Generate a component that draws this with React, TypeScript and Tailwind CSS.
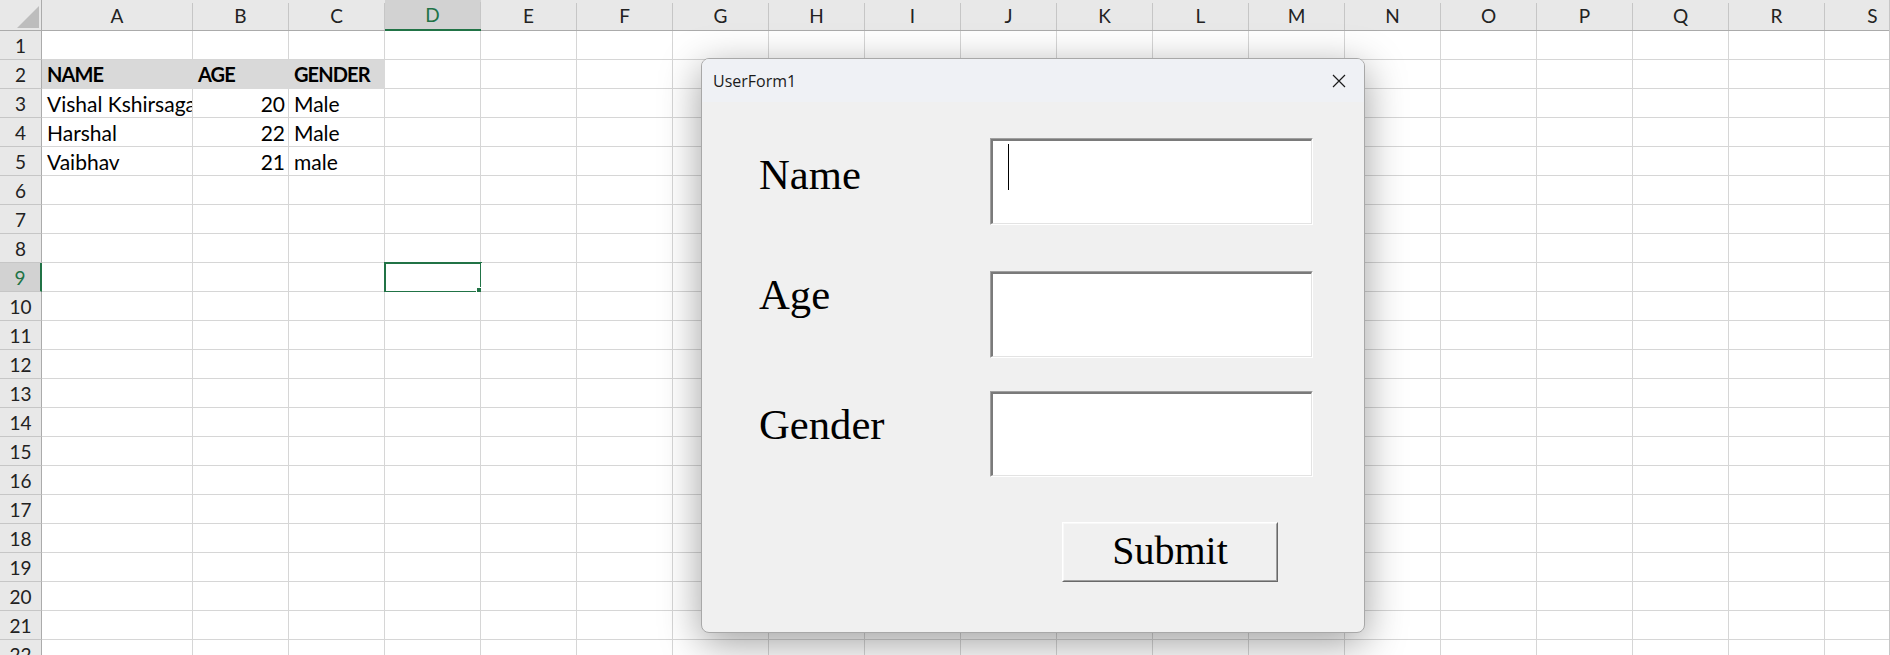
import React from 'react';

const COLS = ['A', 'B', 'C', 'D', 'E', 'F', 'G', 'H', 'I', 'J', 'K', 'L', 'M', 'N', 'O', 'P', 'Q', 'R', 'S'];

type Cell = { t: string; bold?: boolean; right?: boolean };

const DATA: Record<number, Record<string, Cell>> = {
  2: { A: { t: 'NAME', bold: true }, B: { t: 'AGE', bold: true }, C: { t: 'GENDER', bold: true } },
  3: { A: { t: 'Vishal Kshirsagar' }, B: { t: '20', right: true }, C: { t: 'Male' } },
  4: { A: { t: 'Harshal' }, B: { t: '22', right: true }, C: { t: 'Male' } },
  5: { A: { t: 'Vaibhav' }, B: { t: '21', right: true }, C: { t: 'male' } },
};

const ROWS = Array.from({ length: 22 }, (_, i) => i + 1);

function HeaderRow() {
  return (
    <div className="flex h-[31px] shrink-0">
      <div className="relative w-[42px] h-[31px] shrink-0 bg-[#e8e8e8] border-b border-r border-[#ababab]">
        <svg className="absolute right-[2px] bottom-[2px]" width="22" height="22" viewBox="0 0 22 22">
          <polygon points="22,0 22,22 0,22" fill="#bdbdbd" />
        </svg>
      </div>
      {COLS.map((c) => {
        const sel = c === 'D';
        return (
          <div
            key={c}
            className={`${c === 'A' ? 'w-[151px]' : 'w-[96px]'} shrink-0 h-[31px] flex flex-col justify-end ${
              sel ? 'bg-[#d2d2d2] border-b-2 border-[#217346]' : 'bg-[#e8e8e8] border-b border-[#ababab]'
            }`}
          >
            <div
              className={`h-[27px] border-r border-[#c6c6c6] text-center text-[19px] leading-[25px] ${
                sel ? 'text-[#217346]' : 'text-[#222222]'
              }`}
            >
              {c}
            </div>
          </div>
        );
      })}
    </div>
  );
}

function GridRow({ r }: { r: number }) {
  const selRow = r === 9;
  const rowData = DATA[r] || {};
  return (
    <div className="flex h-[29px] shrink-0">
      <div
        className={`w-[42px] h-[29px] shrink-0 border-b border-[#c6c6c6] text-center text-[19px] leading-[29px] ${
          selRow
            ? 'bg-[#d2d2d2] text-[#217346] border-r-2 border-r-[#217346]'
            : 'bg-[#e8e8e8] text-[#222222] border-r border-r-[#ababab]'
        }`}
      >
        {r}
      </div>
      {COLS.map((c) => {
        const cell = rowData[c];
        const filled = r === 2 && (c === 'A' || c === 'B' || c === 'C');
        const selected = r === 9 && c === 'D';
        return (
          <div
            key={c}
            className={`${c === 'A' ? 'w-[151px]' : 'w-[96px]'} shrink-0 h-[29px] relative border-r border-b ${
              filled ? 'bg-[#d9d9d9] border-[#d9d9d9]' : 'bg-white border-[#d6d6d6]'
            }`}
          >
            {cell && (
              <div
                className={`h-full overflow-hidden whitespace-nowrap leading-[29px] text-black px-[5px] ${
                  cell.bold ? 'font-bold text-[20px] tracking-[-0.9px]' : 'font-normal text-[21px]'
                } ${cell.right ? 'text-right pr-[3px]' : 'text-left'}`}
              >
                {cell.t}
              </div>
            )}
            {selected && (
              <>
                <div className="absolute -left-[1px] -top-[1px] w-[98px] h-[31px] border-2 border-[#217346]" />
                <div className="absolute left-[91px] top-[24px] w-[9px] h-[9px] bg-[#217346] border border-white" />
              </>
            )}
          </div>
        );
      })}
    </div>
  );
}

function SunkenBox({ caret }: { caret?: boolean }) {
  return (
    <div className="w-[323px] h-full border-t border-l border-[#a0a0a0] border-b border-b-white border-r border-r-white">
      <div className="relative w-full h-full bg-white border-t-2 border-l-2 border-[#7a7a7a] border-b border-b-[#e3e3e3] border-r border-r-[#e3e3e3]">
        {caret && <div className="absolute left-[15px] top-[3px] w-[1px] h-[46px] bg-black" />}
      </div>
    </div>
  );
}

function UserForm() {
  const serif = { fontFamily: '"Liberation Serif", "Times New Roman", serif' };
  return (
    <div className="absolute left-[701px] top-[58px] w-[664px] h-[575px] rounded-[8px] border border-[#a8a8a8] bg-[#f0f0f0] overflow-hidden shadow-[0_10px_40px_rgba(0,0,0,0.38)]">
      <div
        className="h-[43px] bg-[#eff1f5] flex items-center justify-between pl-[11px] pr-[18px]"
        style={{ fontFamily: '"Open Sans", "Noto Sans", sans-serif' }}
      >
        <span className="text-[16px] text-[#1b1b1b] leading-none">UserForm1</span>
        <svg width="14" height="14" viewBox="0 0 14 14">
          <path d="M1 1 L13 13 M13 1 L1 13" stroke="#1b1b1b" strokeWidth="1.2" fill="none" />
        </svg>
      </div>
      <div className="flex flex-col pl-[57px]" style={serif}>
        <div className="flex h-[87px] mt-[36px]">
          <div className="w-[231px] pt-[16px] text-[42.67px] leading-none text-black">Name</div>
          <SunkenBox caret />
        </div>
        <div className="flex h-[87px] mt-[46px]">
          <div className="w-[231px] pt-[3px] text-[42.67px] leading-none text-black">Age</div>
          <SunkenBox />
        </div>
        <div className="flex h-[86px] mt-[33px]">
          <div className="w-[231px] pt-[13px] text-[42.67px] leading-none text-black">Gender</div>
          <SunkenBox />
        </div>
        <div className="mt-[45px] ml-[303px] w-[216px] h-[60px] border-t border-l border-white border-b border-b-[#696969] border-r border-r-[#696969]">
          <div className="w-full h-full flex justify-center border-t border-l border-[#f8f8f8] border-b border-b-[#a0a0a0] border-r border-r-[#a0a0a0]">
            <span className="pt-[7px] text-[40px] leading-none text-black">Submit</span>
          </div>
        </div>
      </div>
    </div>
  );
}

export default function App() {
  return (
    <div
      className="relative w-[1890px] h-[655px] overflow-hidden bg-white"
      style={{ fontFamily: 'Lato, "Open Sans", sans-serif' }}
    >
      <div className="flex flex-col">
        <HeaderRow />
        {ROWS.map((r) => (
          <GridRow key={r} r={r} />
        ))}
      </div>
      <div className="absolute right-0 top-0 w-[1px] h-full bg-[#c6c6c6]" />
      <UserForm />
    </div>
  );
}
